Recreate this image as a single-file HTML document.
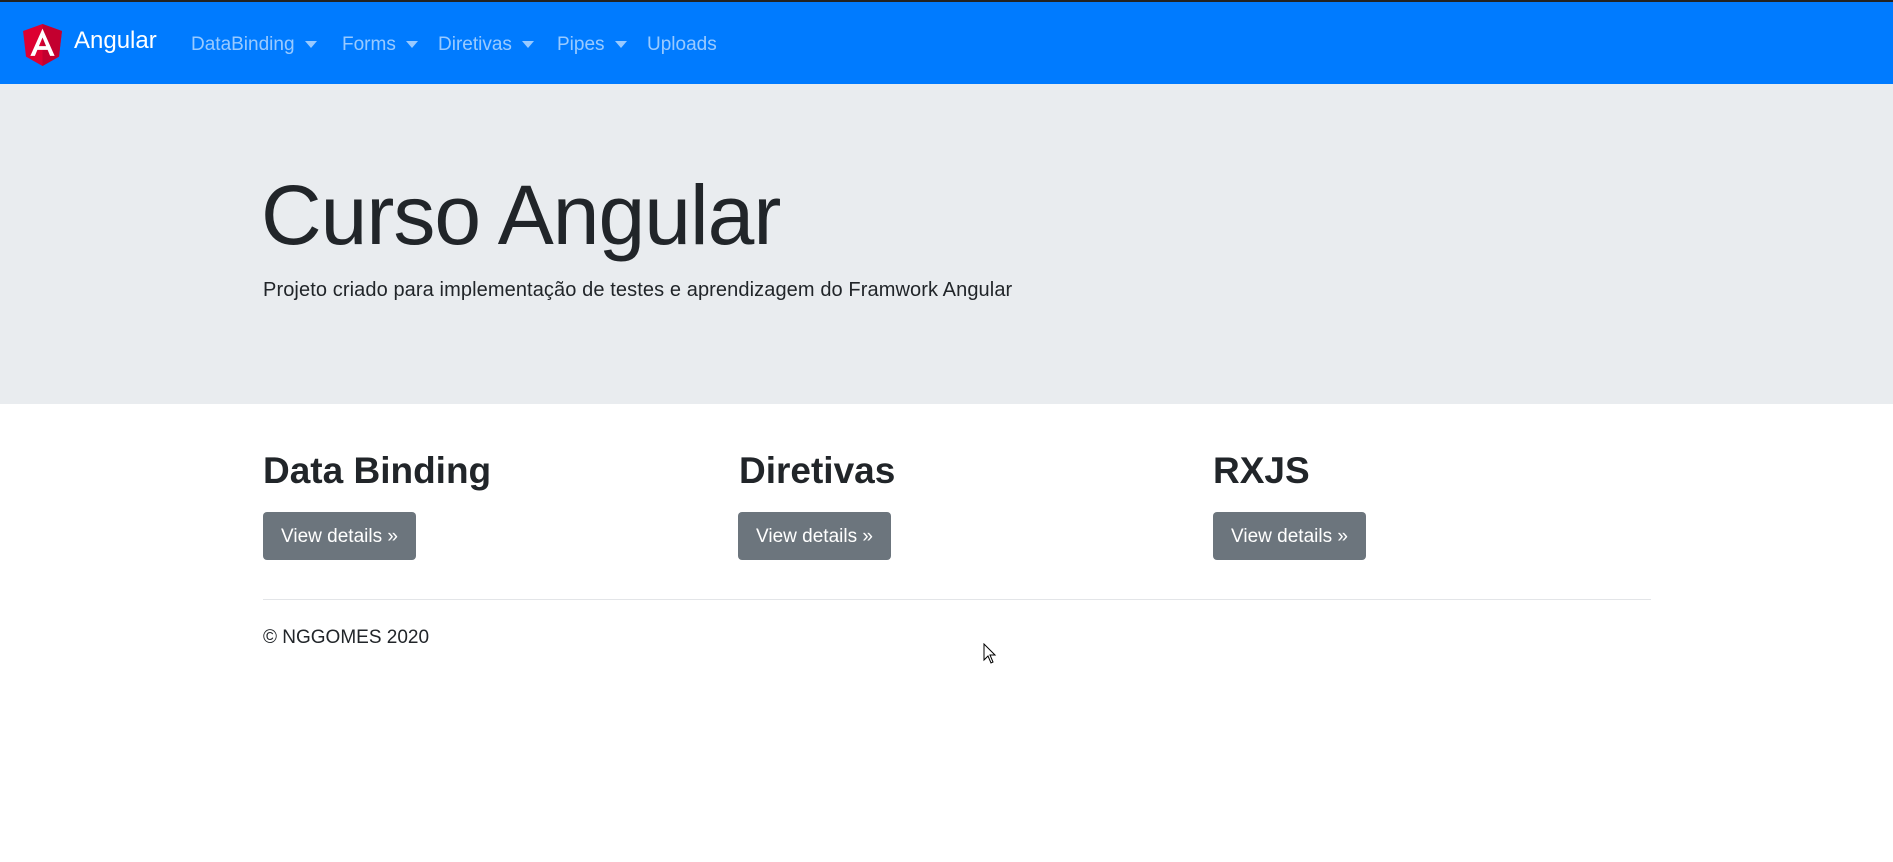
<!DOCTYPE html>
<html><head><meta charset="utf-8"><style>
*{box-sizing:border-box;margin:0;padding:0}
body{width:1893px;height:862px;background:#fff;font-family:"Liberation Sans",sans-serif;color:#212529;position:relative;overflow:hidden}
.nav{position:absolute;left:0;top:0;width:1893px;height:84px;background:#007bff;border-top:2px solid #222}
.logo{position:absolute;left:23px;top:22px}
.brand{position:absolute;left:74px;top:25px;color:#fff;font-size:24px}
.links{position:absolute;left:191px;top:32px;font-size:19px;color:rgba(255,255,255,.6);white-space:nowrap}
.links span{position:absolute}
.caret{display:inline-block;width:0;height:0;border-left:6px solid transparent;border-right:6px solid transparent;border-top:7px solid rgba(255,255,255,.6);vertical-align:middle;margin-left:10px}
.jumbo{position:absolute;left:0;top:84px;width:1893px;height:320px;background:#e9ecef}
h1{position:absolute;left:261px;top:173px;font-size:84px;font-weight:300;line-height:1;letter-spacing:-1px}
.lead{position:absolute;left:263px;top:279px;font-size:20px;letter-spacing:0.1px}
h2{position:absolute;top:452px;font-size:37px;font-weight:bold;line-height:1}
.btn{position:absolute;top:512px;width:153px;height:48px;background:#6c757d;color:#fff;border-radius:4px;font-size:19px;line-height:50px;text-align:center}
.hr{position:absolute;left:263px;top:599px;width:1388px;height:1px;background:#e3e5e8}
.foot{position:absolute;left:263px;top:627px;font-size:19px}
</style></head><body>
<div class="nav">
<svg class="logo" width="39" height="42" viewBox="0 0 250 270"><path d="M125 0L0 45l19 165 106 60 106-60 19-165z" fill="#dd0031"/><path d="M125 0v270l106-60 19-165z" fill="#c3002f"/><path d="M125 30L47 205h29l16-39h66l16 39h29L125 30zm23 112h-46l23-55z" fill="#fff"/></svg>
<div class="brand">Angular</div>
<div class="links">
<span style="left:0">DataBinding<i class="caret"></i></span>
<span style="left:151px">Forms<i class="caret"></i></span>
<span style="left:247px">Diretivas<i class="caret"></i></span>
<span style="left:366px">Pipes<i class="caret"></i></span>
<span style="left:456px">Uploads</span>
</div>
</div>
<div class="jumbo"></div>
<h1>Curso Angular</h1>
<div class="lead">Projeto criado para implementação de testes e aprendizagem do Framwork Angular</div>
<h2 style="left:263px">Data Binding</h2>
<h2 style="left:739px">Diretivas</h2>
<h2 style="left:1213px">RXJS</h2>
<div class="btn" style="left:263px">View details »</div>
<div class="btn" style="left:738px">View details »</div>
<div class="btn" style="left:1213px">View details »</div>
<div class="hr"></div>
<div class="foot">© NGGOMES 2020</div>
<svg style="position:absolute;left:983px;top:643px" width="14" height="22" viewBox="0 0 14 22"><path d="M1 1v16l4-4 3 7 2-1-3-7h5z" fill="#fff" stroke="#000"/></svg>
</body></html>
